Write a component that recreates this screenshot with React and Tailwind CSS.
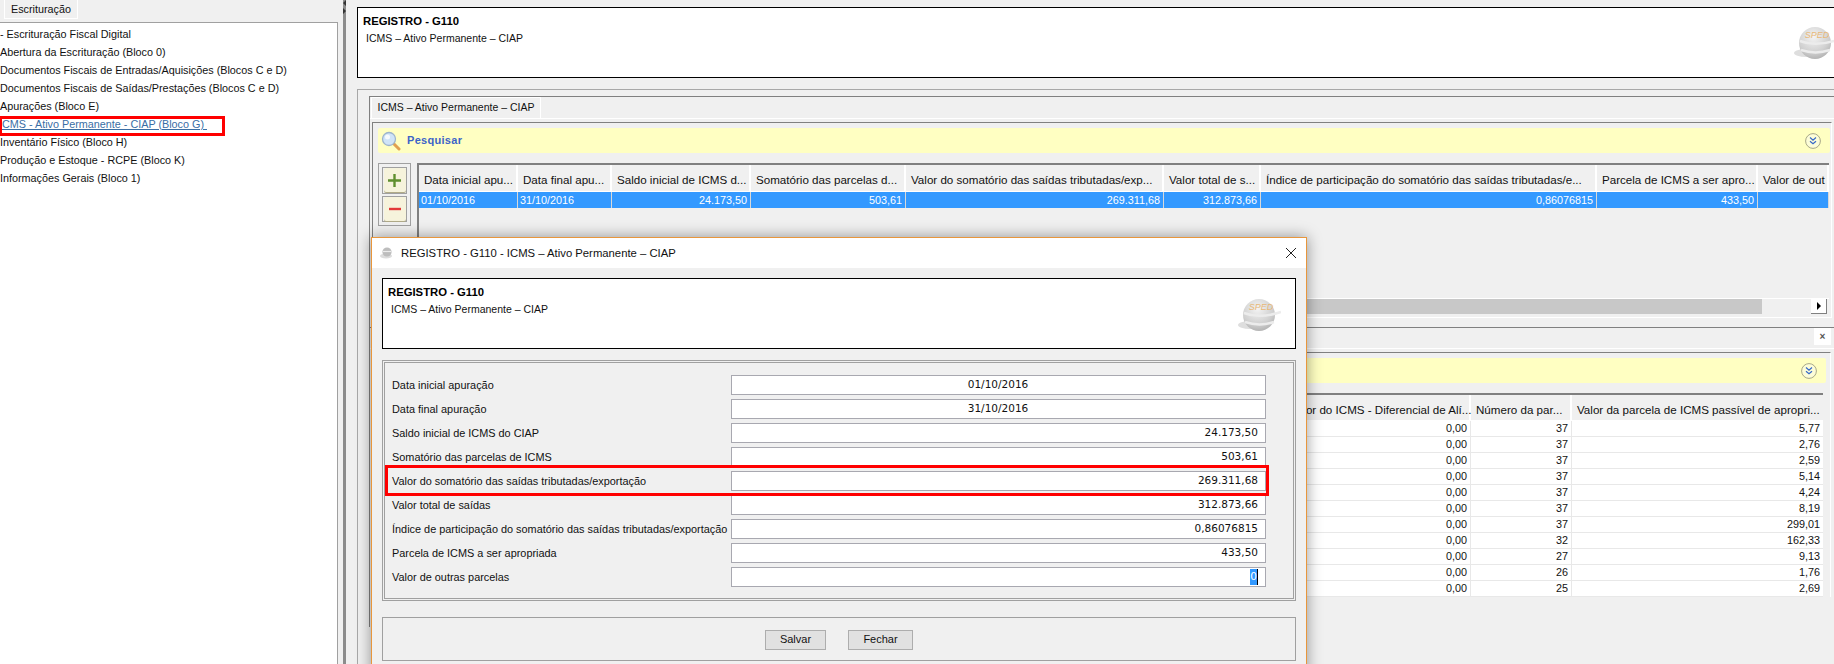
import React from 'react';

const treeItems = [
  '- Escrituração Fiscal Digital',
  'Abertura da Escrituração (Bloco 0)',
  'Documentos Fiscais de Entradas/Aquisições (Blocos C e D)',
  'Documentos Fiscais de Saídas/Prestações (Blocos C e D)',
  'Apurações (Bloco E)',
  'ICMS - Ativo Permanente - CIAP (Bloco G) ',
  'Inventário Físico (Bloco H)',
  'Produção e Estoque - RCPE (Bloco K)',
  'Informações Gerais (Bloco 1)',
];

const topColumns = [
  { title: 'Data inicial apu...', value: '01/10/2016', width: 'w-[99px]', align: 'text-left' },
  { title: 'Data final apu...', value: '31/10/2016', width: 'w-[94px]', align: 'text-left' },
  { title: 'Saldo inicial de ICMS d...', value: '24.173,50', width: 'w-[139px]', align: 'text-right' },
  { title: 'Somatório das parcelas d...', value: '503,61', width: 'w-[155px]', align: 'text-right' },
  { title: 'Valor do somatório das saídas tributadas/exp...', value: '269.311,68', width: 'w-[258px]', align: 'text-right' },
  { title: 'Valor total de s...', value: '312.873,66', width: 'w-[97px]', align: 'text-right' },
  { title: 'Índice de participação do somatório das saídas tributadas/e...', value: '0,86076815', width: 'w-[336px]', align: 'text-right' },
  { title: 'Parcela de ICMS a ser apro...', value: '433,50', width: 'w-[161px]', align: 'text-right' },
  { title: 'Valor de out', value: '', width: 'w-[71px]', align: 'text-right' },
];

const bottomRows = [
  ['0,00', '37', '5,77'],
  ['0,00', '37', '2,76'],
  ['0,00', '37', '2,59'],
  ['0,00', '37', '5,14'],
  ['0,00', '37', '4,24'],
  ['0,00', '37', '8,19'],
  ['0,00', '37', '299,01'],
  ['0,00', '32', '162,33'],
  ['0,00', '27', '9,13'],
  ['0,00', '26', '1,76'],
  ['0,00', '25', '2,69'],
];

const formRows = [
  { label: 'Data inicial apuração', value: '01/10/2016', center: true },
  { label: 'Data final apuração', value: '31/10/2016', center: true },
  { label: 'Saldo inicial de ICMS do CIAP', value: '24.173,50' },
  { label: 'Somatório das parcelas de ICMS', value: '503,61' },
  { label: 'Valor do somatório das saídas tributadas/exportação', value: '269.311,68' },
  { label: 'Valor total de saídas', value: '312.873,66' },
  { label: 'Índice de participação do somatório das saídas tributadas/exportação', value: '0,86076815' },
  { label: 'Parcela de ICMS a ser apropriada', value: '433,50' },
  { label: 'Valor de outras parcelas', value: '0', selected: true },
];

const SearchIcon = () => (
  <svg width="20" height="20" viewBox="0 0 20 20" className="shrink-0">
    <path d="M12 12l6 6" stroke="#e0a050" strokeWidth="3" strokeLinecap="round" />
    <circle cx="8" cy="8" r="6.5" fill="#cfe4f8" stroke="#9db4cc" strokeWidth="1.3" />
    <circle cx="6.5" cy="6" r="2.5" fill="#fff" opacity="0.8" />
  </svg>
);

const ChevronsIcon = () => (
  <svg width="16" height="16" viewBox="0 0 16 16" className="shrink-0">
    <circle cx="8" cy="8" r="7.4" fill="#fdfdd8" stroke="#a8a888" strokeWidth="1" />
    <path d="M5 4.5l3 2.6 3-2.6M5 8.2l3 2.6 3-2.6" fill="none" stroke="#3568c8" strokeWidth="1.2" />
  </svg>
);

const SpedLogo = ({ className }) => (
  <svg width="44" height="36" viewBox="0 0 44 36" className={className}>
    <defs>
      <radialGradient id="sped" cx="45%" cy="30%" r="70%">
        <stop offset="0%" stopColor="#f4f4f4" />
        <stop offset="70%" stopColor="#d0d0d0" />
        <stop offset="100%" stopColor="#b4b4b4" />
      </radialGradient>
    </defs>
    <ellipse cx="13" cy="28" rx="12" ry="4" fill="#dedede" />
    <circle cx="22" cy="18" r="16" fill="url(#sped)" />
    <path d="M7 16c10 4 22 4 37-1M8 25c9 3 20 3 29 0" fill="none" stroke="#ececec" strokeWidth="2.5" />
    <text x="24" y="13" textAnchor="middle" fontSize="9" fontStyle="italic" fill="#e8b878" fontFamily="Liberation Sans, sans-serif">SPED</text>
  </svg>
);

const TinyLogo = () => (
  <svg width="14" height="12" viewBox="0 0 14 12" className="shrink-0">
    <ellipse cx="6" cy="9" rx="6" ry="2.5" fill="#dcdcdc" />
    <circle cx="7" cy="5" r="4.6" fill="#bdbdbd" />
    <path d="M3 4.5h8" stroke="#ececec" strokeWidth="1.2" />
  </svg>
);

const Panel = ({ open }) => (
  <div className={`flex h-[71px] justify-between border border-black bg-white ${open ? 'border-r-0' : ''}`}>
    <div className="pl-[5px] pt-[4px]">
      <div className="text-[11.3px] font-bold leading-[18px] text-black">REGISTRO - G110</div>
      <div className="pl-[3px] text-[10.5px] leading-[16px] text-[#111]">ICMS – Ativo Permanente – CIAP</div>
    </div>
  </div>
);

const AddRemove = () => (
  <div className="flex h-[63px] w-[33px] shrink-0 flex-col gap-[2px] border border-[#a0a0a0] p-[3px]">
    <div className="flex h-[27px] items-center justify-center border border-[#a0a0a0] bg-[#f0f0f0]">
      <div className="flex h-[24px] w-[22px] items-center justify-center rounded-[2px] bg-[#f6f3dc] shadow-[0_1px_0_#b0aa88]">
        <svg width="15" height="15" viewBox="0 0 15 15"><path d="M7.5 1v13M1 7.5h13" stroke="#5f8f2f" strokeWidth="2.4" /></svg>
      </div>
    </div>
    <div className="flex h-[27px] items-center justify-center border border-[#a0a0a0] bg-[#f0f0f0]">
      <div className="flex h-[24px] w-[22px] items-center justify-center rounded-[2px] bg-[#f6f3dc] shadow-[0_1px_0_#b0aa88]">
        <svg width="12" height="4" viewBox="0 0 12 4"><path d="M0 2h12" stroke="#e23a3a" strokeWidth="2.4" /></svg>
      </div>
    </div>
  </div>
);

const YellowBar = ({ children }) => (
  <div className="flex h-[25px] items-center justify-between rounded-[2px] bg-[#ffffc2] pl-[3px] pr-[9px]">
    <div className="flex items-center gap-[6px]">{children}</div>
    <ChevronsIcon />
  </div>
);

const FormField = ({ row }) => (
  <div className="flex h-[20px] items-center">
    <span className="w-[339px] shrink-0 whitespace-nowrap text-[10.9px] text-[#111]">{row.label}</span>
    <div
      className={`flex h-[20px] w-[535px] shrink-0 items-center border border-[#a8a8b0] bg-white pl-[6px] pr-[7px] font-['DejaVu_Sans',sans-serif] text-[10.5px] text-[#111] ${
        row.center ? 'justify-center' : 'justify-end'
      }`}
    >
      {row.selected ? <span className="border-r border-black bg-[#3399ff] text-white">{row.value}</span> : row.value}
    </div>
  </div>
);

const Dialog = () => (
  <div className="absolute left-[371px] top-[237px] h-[440px] w-[936px] border border-[#e8963c] bg-[#f0f0f0] shadow-[0_0_14px_rgba(0,0,0,0.4)]">
    <div className="flex h-[30px] items-center justify-between bg-white pl-[8px] pr-[7px]">
      <div className="flex items-center gap-[7px] text-[11.3px] text-[#111]">
        <TinyLogo />
        <span>REGISTRO - G110 - ICMS – Ativo Permanente – CIAP</span>
      </div>
      <svg width="16" height="16" viewBox="0 0 16 16"><path d="M3 3l10 10M13 3L3 13" stroke="#222" strokeWidth="1" /></svg>
    </div>
    <div className="px-[10px] pt-[10px]">
      <div className="relative">
        <Panel />
        <SpedLogo className="absolute right-[15px] top-[19px]" />
      </div>
      <div className="mt-[11px] h-[241px] border border-[#a0a0a0] p-[1px]">
        <div className="flex h-full flex-col gap-[4px] border border-[#a0a0a0] pl-[7px] pt-[12px]">
          {formRows.map((row) => (
            <FormField key={row.label} row={row} />
          ))}
        </div>
      </div>
      <div className="mt-[16px] flex h-[44px] items-center justify-center gap-[22px] border border-[#a0a0a0] pt-[1px]">
        <button className="h-[20px] w-[61px] border border-[#adadad] bg-[#e1e1e1] text-[11px] text-[#111]">Salvar</button>
        <button className="h-[20px] w-[65px] border border-[#adadad] bg-[#e1e1e1] text-[11px] text-[#111]">Fechar</button>
      </div>
    </div>
    <div className="absolute left-[13px] top-[227px] h-[31px] w-[884px] border-[3px] border-[#f00]" />
  </div>
);

const App = () => {
  return (
    <div className="relative flex h-[664px] w-[1834px] overflow-hidden bg-[#f0f0f0] font-['Liberation_Sans',sans-serif] text-[12px] text-[#111]">
      <aside className="flex w-[343px] shrink-0 flex-col">
        <div className="h-[22px]">
          <div className="ml-[4px] flex h-[19px] w-[74px] items-center justify-center border-x border-b border-white text-[10.8px]">
            Escrituração
          </div>
        </div>
        <div className="mr-[5px] flex-1 border-r border-t border-[#a0a0a0] bg-white pt-[2px]">
          {treeItems.map((item, index) => (
            <div
              key={item}
              className={`h-[18px] whitespace-pre text-[10.8px] leading-[18px] ${
                index === 5 ? '-ml-[1px] text-[#3a6ea5] underline' : 'text-[#111]'
              }`}
            >
              {item}
            </div>
          ))}
        </div>
      </aside>

      <div className="relative w-[3px] shrink-0 bg-[#8c8c8c]">
        <svg width="4" height="14" viewBox="0 0 4 14" className="absolute left-0 top-0">
          <path d="M3 0L0 3l3 3zM0 8l3 3-3 3z" fill="#333" />
        </svg>
      </div>

      <main className="min-w-0 flex-1 pl-[11px] pt-[7px]">
        <div className="relative">
          <Panel open />
          <SpedLogo className="absolute right-[-3px] top-[18px]" />
        </div>

        <div className="mt-[11px] h-[600px] border-l border-t border-[#a8a8a8] pl-[11px] pt-[6px]">
          <section className="h-[231px] border-l border-t border-[#808080]">
            <div className="h-[22px] border-b border-white pl-[1px]">
              <div className="flex h-[21px] w-[170px] items-center justify-center whitespace-nowrap border-x border-t border-white text-[10.5px]">
                ICMS – Ativo Permanente – CIAP
              </div>
            </div>
            <div className="mx-[2px] mt-[3px] h-[196px] border border-b-white border-l-[#808080] border-r-white border-t-[#808080] pl-[5px] pr-[1px] pt-[5px]">
              <YellowBar>
                <SearchIcon />
                <span className="text-[11px] font-bold tracking-[0.3px] text-[#3c64c8]">Pesquisar</span>
              </YellowBar>
              <div className="mt-[10px] flex h-[155px] gap-[6px]">
                <AddRemove />
                <div className="flex w-[1412px] flex-col border-l-2 border-t-2 border-[#808080]">
                  <div className="flex h-[27px] border-b border-white">
                    {topColumns.map((col) => (
                      <div key={col.title} className={`${col.width} shrink-0 whitespace-nowrap border-r-2 border-white pl-[5px] pt-[6px] text-[11.6px]`}>
                        {col.title}
                      </div>
                    ))}
                  </div>
                  <div className="flex h-[16px] bg-[#3399ff] text-white">
                    {topColumns.map((col) => (
                      <div key={col.title} className={`${col.width} ${col.align} shrink-0 whitespace-nowrap border-r border-[#d8d8d8] pl-[2px] pr-[3px] text-[10.8px] leading-[16px]`}>
                        {col.value}
                      </div>
                    ))}
                  </div>
                  <div className="flex-1" />
                  <div className="mb-[4px] flex h-[16px] items-stretch border-t border-white">
                    <div className="w-[1343px] bg-[#c8c8c8]" />
                    <div className="flex-1" />
                    <div className="mr-[2px] flex w-[16px] items-center justify-center border-b border-r border-[#808080] bg-white">
                      <svg width="6" height="8" viewBox="0 0 6 8"><path d="M1 0l4 4-4 4z" fill="#000" /></svg>
                    </div>
                  </div>
                </div>
              </div>
            </div>
          </section>

          <section className="h-[300px] border-l border-t border-[#808080]">
            <div className="flex h-[21px] justify-end border-b border-white pr-[3px]">
              <div className="flex h-[17px] w-[17px] items-center justify-center bg-white text-[10px] font-bold text-[#555]">×</div>
            </div>
            <div className="ml-[2px] mr-[3px] mt-[3px] border-l border-r border-t border-l-[#808080] border-r-white border-t-[#808080] pl-[5px] pr-[4px] pt-[5px]">
              <YellowBar>
                <span className="text-[11px] font-bold text-[#3c64c8]">Pesquisar</span>
              </YellowBar>
              <div className="ml-[39px] mr-[3px] mt-[10px] border-t-2 border-[#808080] text-[11.6px]">
                <div className="flex h-[26px] justify-end whitespace-nowrap border-b border-white">
                  <div className="w-[186px] border-r-2 border-white pl-[5px] pt-[6px]">Valor do ICMS - Diferencial de Alí...</div>
                  <div className="w-[101px] border-r-2 border-white pl-[5px] pt-[6px]">Número da par...</div>
                  <div className="w-[251px] pl-[5px] pt-[6px]">Valor da parcela de ICMS passível de apropri...</div>
                </div>
                <div className="bg-white text-[10.8px]">
                  {bottomRows.map((row, index) => (
                    <div key={index} className="flex h-[16px] justify-end border-b border-[#e8e8e8] text-right leading-[15px]">
                      <div className="w-[186px] border-r border-[#e8e8e8] pr-[3px]">{row[0]}</div>
                      <div className="w-[101px] border-r border-[#e8e8e8] pr-[3px]">{row[1]}</div>
                      <div className="w-[251px] pr-[3px]">{row[2]}</div>
                    </div>
                  ))}
                </div>
              </div>
            </div>
          </section>
        </div>
      </main>

      <Dialog />
      <div className="absolute left-0 top-[116px] h-[20px] w-[225px] border-[3px] border-l-2 border-[#f00]" />
    </div>
  );
};

export default App;
